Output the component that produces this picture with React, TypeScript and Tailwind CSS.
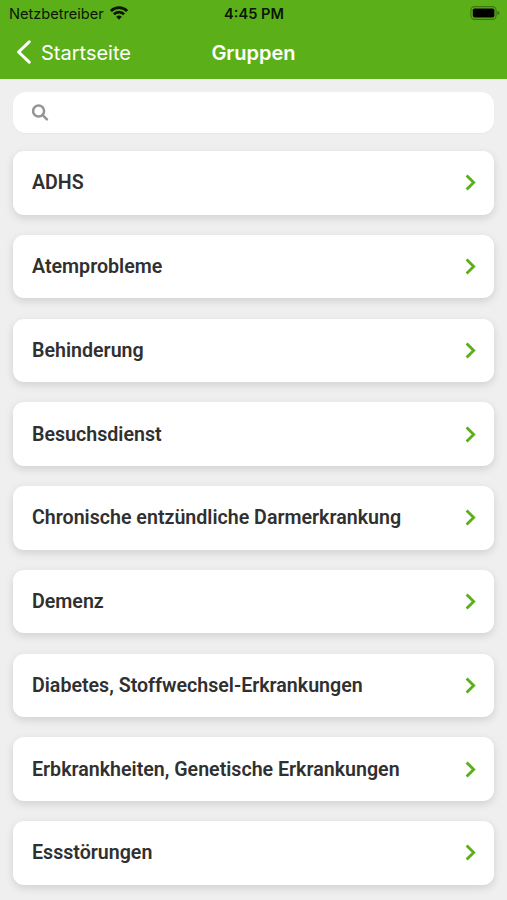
const groups = [
  'ADHS',
  'Atemprobleme',
  'Behinderung',
  'Besuchsdienst',
  'Chronische entzündliche Darmerkrankung',
  'Demenz',
  'Diabetes, Stoffwechsel-Erkrankungen',
  'Erbkrankheiten, Genetische Erkrankungen',
  'Essstörungen',
];

function WifiIcon() {
  return (
    <svg className="-mt-[2px]" width="18" height="14" viewBox="0 0 18 14" fill="none" stroke="#0b1604" strokeWidth="2.7">
      <path d="M0.9 5.1a11.4 11.4 0 0 1 16.2 0" />
      <path d="M3.9 8.3a7.2 7.2 0 0 1 10.2 0" />
      <path d="M9 13.7 6.2 10.8a4 4 0 0 1 5.6 0z" fill="#0b1604" stroke="none" />
    </svg>
  );
}

function BatteryIcon() {
  return (
    <svg className="-mt-[2px]" width="30" height="14" viewBox="0 0 30 14">
      <rect x="0.9" y="0.6" width="25.2" height="12.8" rx="3.8" fill="none" stroke="#3a7512" strokeWidth="1.1" />
      <rect x="2.8" y="2.4" width="21.6" height="9.2" rx="1.8" fill="#000" />
      <path d="M27.4 4.8c1.4.5 2 1.2 2 2.2s-.6 1.7-2 2.2z" fill="#3a7512" />
    </svg>
  );
}

function Header() {
  return (
    <header className="h-[79px] bg-[#5bb019] font-['Inter',sans-serif]">
      <div className="grid h-[28px] grid-cols-3 items-center pl-[9px] pr-[7px] text-[#0b1604]">
        <div className="flex items-center gap-[6px]">
          <span className="text-[14.6px] leading-none">Netzbetreiber</span>
          <WifiIcon />
        </div>
        <span className="-ml-px text-center text-[14.6px] font-semibold leading-none">4:45 PM</span>
        <div className="flex justify-end">
          <BatteryIcon />
        </div>
      </div>
      <div className="grid h-[49px] grid-cols-3 items-center px-4 text-white">
        <div className="flex items-center gap-[10px]">
          <svg className="-mt-px" width="15" height="24" viewBox="0 0 15 24" fill="none" stroke="currentColor" strokeWidth="3" strokeLinecap="round" strokeLinejoin="round">
            <path d="M13.2 1.8 2.6 12l10.6 10.2" />
          </svg>
          <span className="text-[20px] leading-none">Startseite</span>
        </div>
        <h1 className="text-center text-[20px] font-semibold leading-none">Gruppen</h1>
      </div>
    </header>
  );
}

function GroupCard({ name }: { name: string }) {
  return (
    <li className="flex h-[63.5px] items-center justify-between rounded-[11px] bg-white pl-[19px] pr-[18px] shadow-[0_3px_8px_rgba(0,0,0,0.13)]">
      <span className="whitespace-nowrap pt-[0.8px] text-[19.62px] font-semibold leading-none text-[#303030]">{name}</span>
      <svg width="11" height="17" viewBox="0 0 11 17" fill="none" stroke="#5bb019" strokeWidth="2.8">
        <path d="M1.6 1.4 8.7 8.5l-7.1 7.1" />
      </svg>
    </li>
  );
}

export default function App() {
  return (
    <div className="h-[900px] w-[507px] overflow-hidden bg-[#efefef] font-['Roboto',sans-serif]">
      <Header />
      <main className="px-[13px] pt-[13px]">
        {/* Search */}
        <div className="flex h-[41px] items-center rounded-[13px] bg-white pl-[18.5px] shadow-[0_1px_2px_rgba(0,0,0,0.04)]">
          <svg width="17" height="17" viewBox="0 0 17 17" fill="none" stroke="#959595" strokeWidth="2.5" strokeLinecap="round">
            <circle cx="6.6" cy="7" r="5.5" />
            <path d="m10.9 11.3 4 4" />
          </svg>
        </div>
        <ul className="mt-[18px] flex flex-col gap-[20.25px]">
          {groups.map((name) => (
            <GroupCard key={name} name={name} />
          ))}
        </ul>
      </main>
    </div>
  );
}
